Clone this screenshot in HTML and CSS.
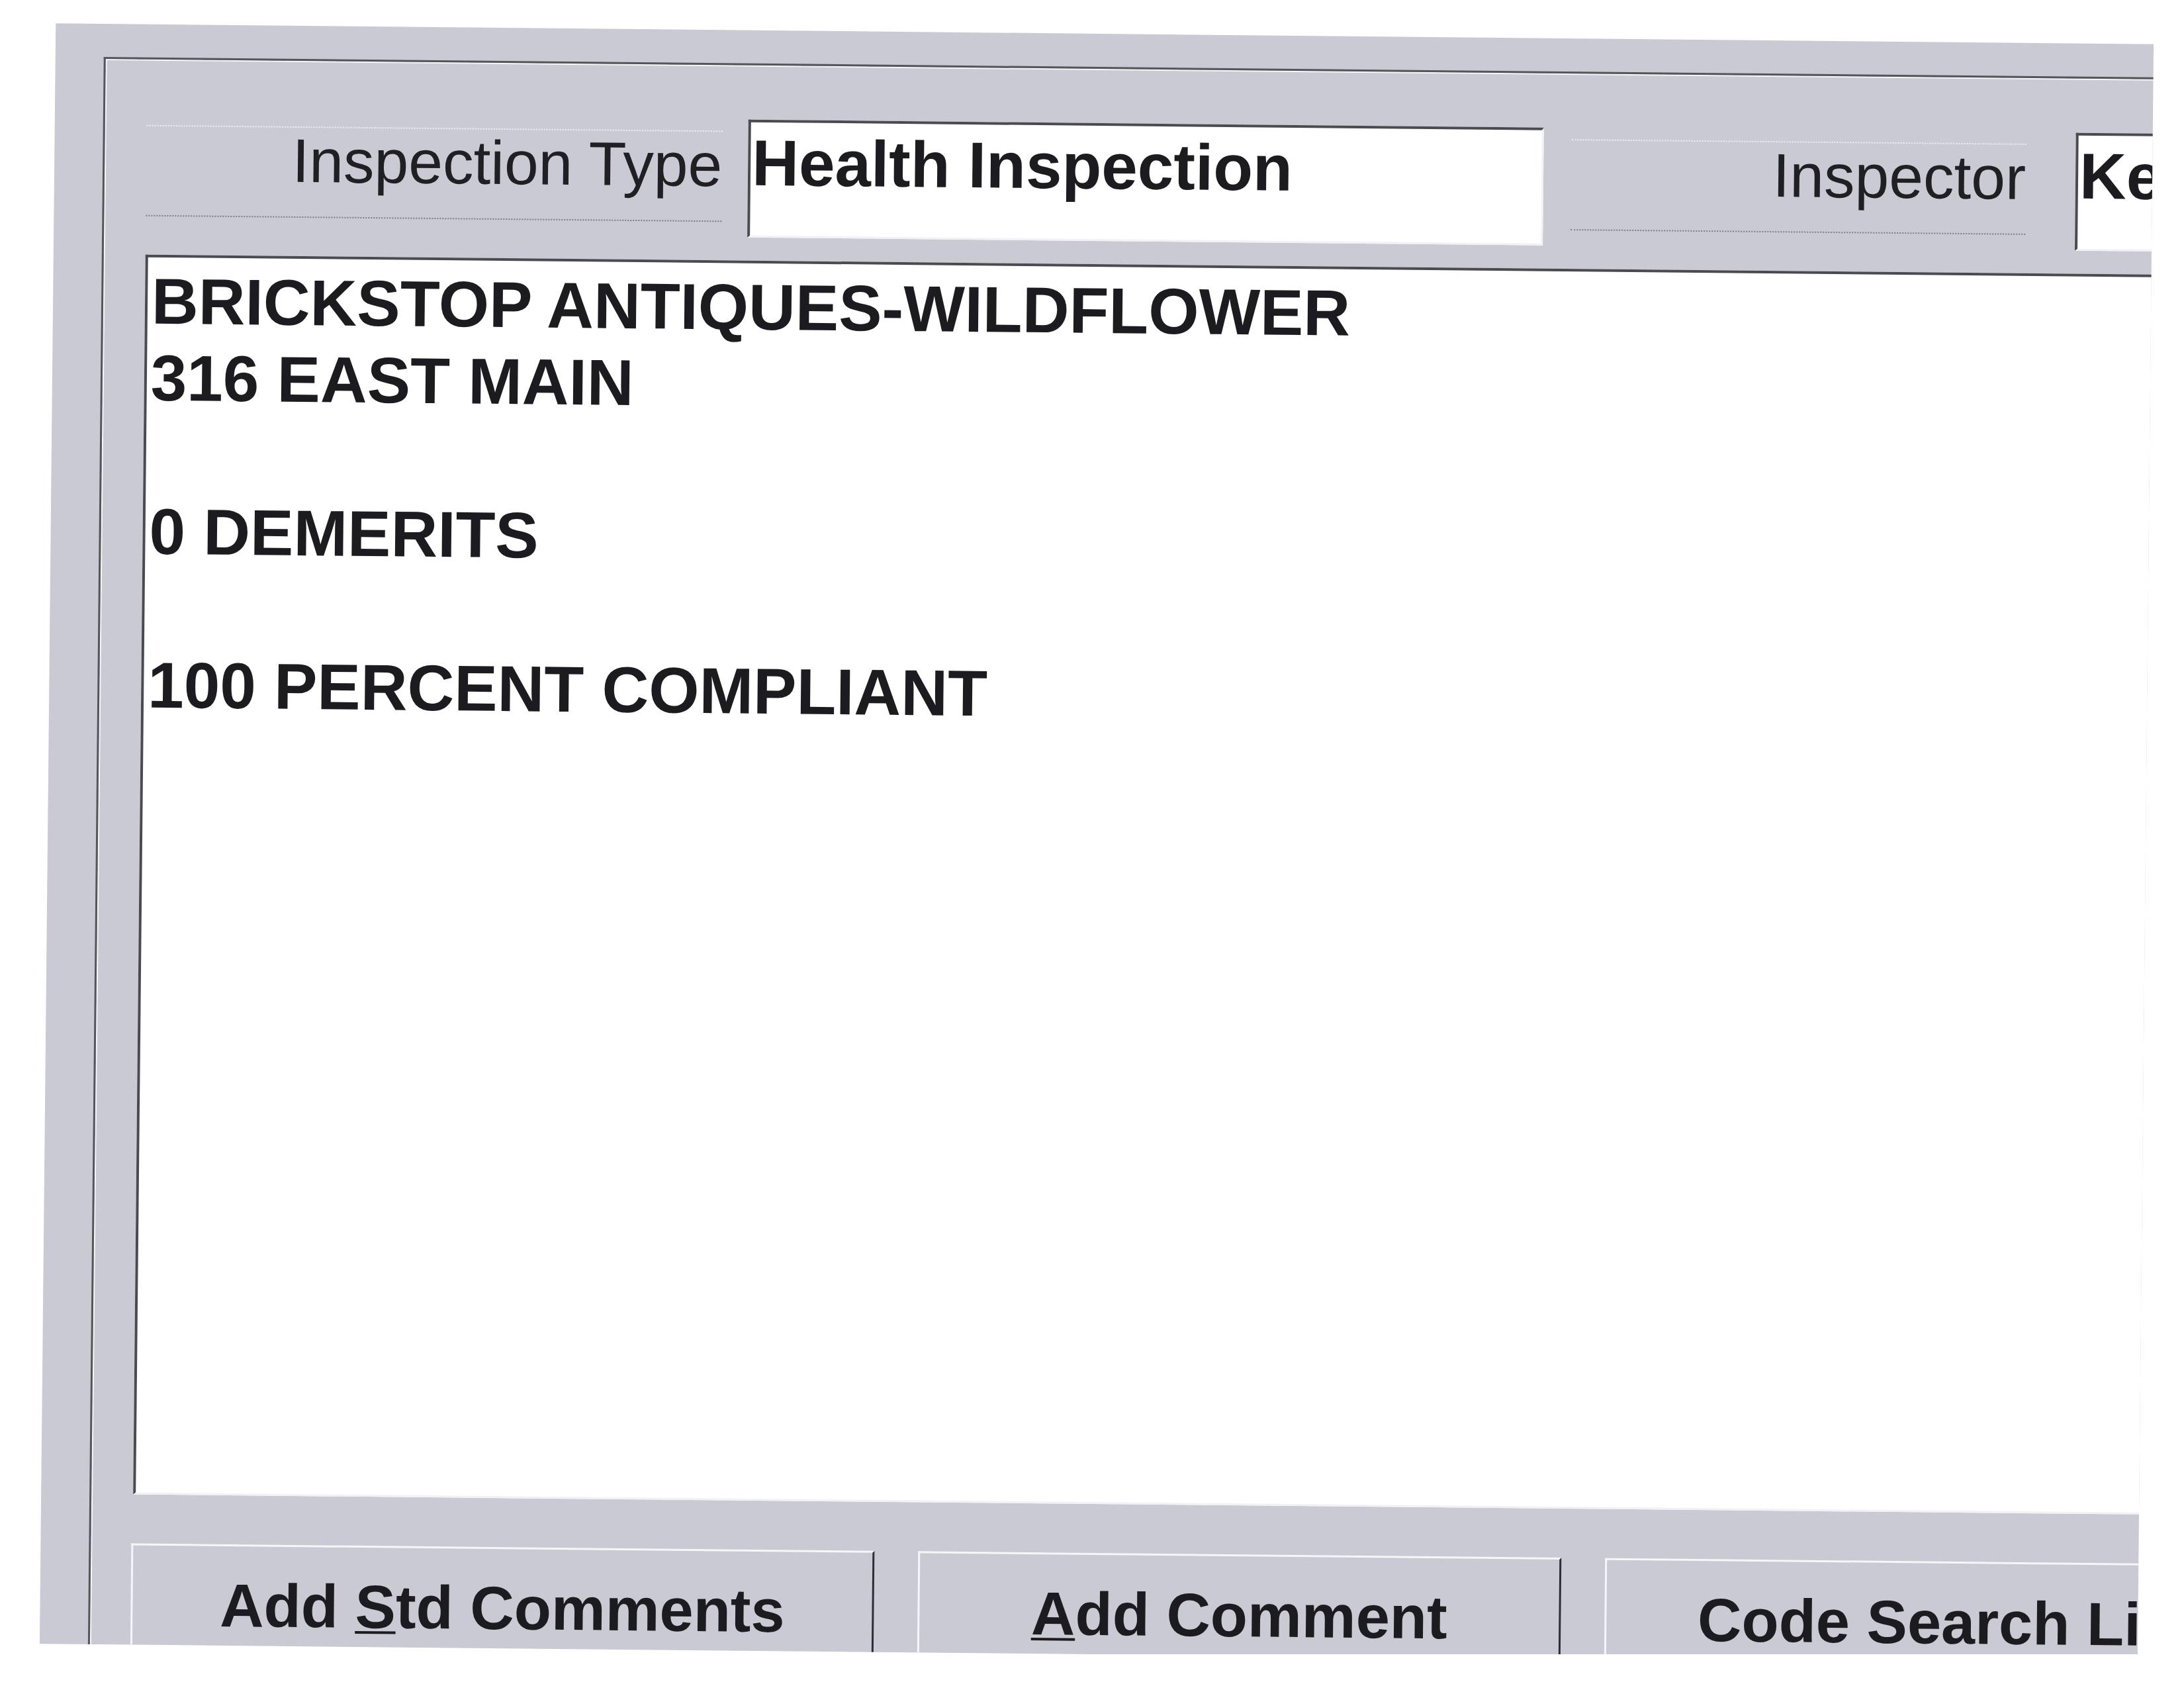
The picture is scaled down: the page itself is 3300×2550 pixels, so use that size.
FILE: index.html
```html
<!DOCTYPE html>
<html lang="en">
<head>
<meta charset="utf-8">
<title>Inspection</title>
<link rel="stylesheet" href="styles.css">
</head>
<body>
<div class="scan">
  <div class="panel">
    <div class="header">
      <div class="label label-type">Inspection Type</div>
      <div class="field field-type">Health Inspection</div>
      <div class="label label-inspector">Inspector</div>
      <div class="field field-inspector">Ke</div>
    </div>
    <div class="memo">BRICKSTOP ANTIQUES-WILDFLOWER
316 EAST MAIN

0 DEMERITS

100 PERCENT COMPLIANT</div>
    <div class="buttons">
      <div class="btn btn-std">Add <u>S</u>td Comments</div>
      <div class="btn btn-add"><u>A</u>dd Comment</div>
      <div class="btn btn-code">Code Search List</div>
    </div>
  </div>
</div>
</body>
</html>
```

FILE: styles.css
```css
html, body {
  margin: 0;
  padding: 0;
  background: #ffffff;
  overflow: hidden;
}

body {
  font-family: "Liberation Sans", Arial, sans-serif;
  color: #1c1c20;
}

.scan {
  width: 3170px;
  height: 2448px;
  margin: 51px 0 0 72px;
  background: #c9cad3;
  overflow: hidden;
  transform: rotate(0.57deg);
  transform-origin: center center;
  box-sizing: border-box;
  padding: 50px 0 0 73px;
}

.panel {
  width: 3200px;
  height: 2600px;
  box-sizing: border-box;
  border-top: 3px solid #55565c;
  border-left: 3px solid #55565c;
  box-shadow: inset 2px 2px 0 #f6f6fa;
  padding: 82px 0 0 63px;
}

.header {
  display: flex;
  align-items: flex-start;
  flex-wrap: nowrap;
}

.label {
  flex-shrink: 0;
  box-sizing: border-box;
  height: 138px;
  margin-top: 17px;
  border-top: 2px dotted #eef0f6;
  border-bottom: 2px dotted #7c7d84;
  font-size: 93px;
  line-height: 1;
  padding-top: 4px;
  text-align: right;
  white-space: nowrap;
  overflow: visible;
  color: #202024;
}

.label-type {
  width: 870px;
  margin-right: 39px;
}

.label-inspector {
  width: 687px;
  margin-right: 75px;
  overflow: hidden;
}

.field {
  flex-shrink: 0;
  box-sizing: border-box;
  height: 178px;
  background: #ffffff;
  border-top: 4px solid #4a4b50;
  border-left: 4px solid #4a4b50;
  border-bottom: 3px solid #f2f2f6;
  border-right: 3px solid #f2f2f6;
  font-size: 98px;
  font-weight: bold;
  line-height: 1;
  padding: 12px 0 0 2px;
  white-space: nowrap;
  overflow: hidden;
}

.field-type {
  width: 1202px;
  margin-right: 42px;
}

.field-inspector {
  width: 400px;
  border-right: none;
}

.memo {
  box-sizing: border-box;
  width: 3120px;
  height: 1873px;
  margin-top: 35px;
  background: #ffffff;
  border-top: 4px solid #4a4b50;
  border-left: 4px solid #4a4b50;
  border-bottom: 3px solid #f2f2f6;
  font-size: 98px;
  font-weight: bold;
  line-height: 116px;
  padding: 8px 0 0 6px;
  white-space: pre;
  overflow: hidden;
}

.buttons {
  display: flex;
  flex-wrap: nowrap;
  gap: 66px;
  margin-top: 74px;
  margin-left: -2px;
}

.btn {
  flex-shrink: 0;
  box-sizing: border-box;
  height: 240px;
  border-top: 3px solid #f6f6fa;
  border-left: 3px solid #f6f6fa;
  border-right: 3px solid #2e2f33;
  font-size: 92px;
  font-weight: bold;
  line-height: 1;
  padding-top: 43px;
  text-align: center;
  white-space: nowrap;
  overflow: hidden;
}

.btn u {
  text-decoration-thickness: 4px;
  text-underline-offset: 5px;
}

.btn-std {
  width: 1123px;
}

.btn-add {
  width: 972px;
}

.btn-code {
  width: 1030px;
  border-right: none;
}
```
